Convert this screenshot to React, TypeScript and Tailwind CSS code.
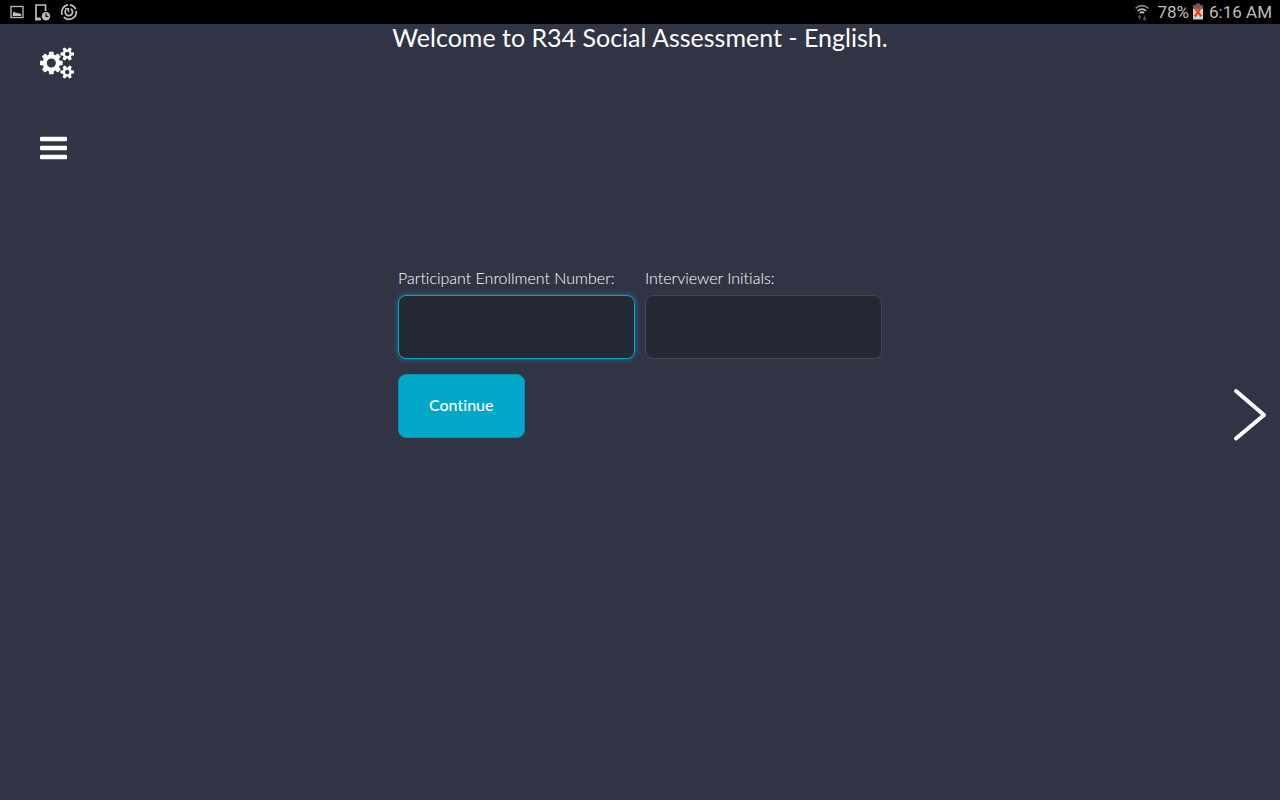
import { useId } from 'react';

function ImageIcon() {
  return (
    <svg className="h-4 w-4" viewBox="0 0 16 16" fill="none">
      <rect x="2" y="2.5" width="12" height="11" stroke="#bdbdbd" strokeWidth="1.3" />
      <path d="M3.8 12V9L5.5 7.5L7 9.2L8.5 8.6L9.5 9.6L11 9.2L12.2 10.2V12Z" fill="#bdbdbd" />
    </svg>
  );
}

function DeviceClockIcon() {
  return (
    <svg className="h-5 w-5" viewBox="0 0 20 20" fill="none">
      <path d="M13.5 9V3H4V17.5H9" stroke="#bdbdbd" strokeWidth="1.7" />
      <path d="M3.2 15.5H8.5V18.3H3.2Z" fill="#bdbdbd" />
      <circle cx="14" cy="14.2" r="4.2" fill="#bdbdbd" />
      <path d="M14 11.5V14.4H16.4" stroke="#000" strokeWidth="1.1" />
    </svg>
  );
}

function SyncRingIcon() {
  return (
    <svg className="h-5 w-5" viewBox="0 0 20 20" fill="none" stroke="#bdbdbd">
      <path d="M9 2.8A7.3 7.3 0 0 0 3.3 12.8" strokeWidth="1.8" />
      <path d="M4.8 15.1A7.3 7.3 0 0 0 17.2 8.9" strokeWidth="1.8" />
      <path d="M10.8 2.8A7.3 7.3 0 0 1 16.6 7.2" strokeWidth="1.8" />
      <path d="M7 7.6A3.7 3.7 0 1 0 11.6 6.7" strokeWidth="1.8" />
      <path d="M6.2 6.8H9.4V10" strokeWidth="1.5" />
    </svg>
  );
}

function WifiIcon() {
  return (
    <svg className="h-5 w-4" viewBox="0 0 16 20" fill="none" strokeWidth="1.6">
      <path d="M1.6 6.4Q8 1 14.4 6.4" stroke="#8c8c8c" />
      <path d="M3.8 8.9Q8 5.2 12.2 8.9" stroke="#b8b8b8" />
      <path d="M5.9 11.2Q8 9.2 10.1 11.2" stroke="#c8c8c8" />
      <path d="M5.5 18V13.6M3.8 15.5L5.5 13.6L7.2 15.5M10.5 13.6V18M8.8 16L10.5 18L12.2 16" stroke="#4d4d4d" strokeWidth="1.2" />
    </svg>
  );
}

function BatteryIcon() {
  return (
    <svg className="h-5 w-3" viewBox="0 0 12 20" fill="none">
      <path d="M4 1.5H8V3H11V8H1V3H4Z" fill="#606060" />
      <path d="M1 7H11V17.5H1Z" fill="#d2d2d2" />
      <path d="M2.3 5.5L9.4 14.3M9.4 5L2.8 14.5" stroke="#e9451d" strokeWidth="2.2" />
    </svg>
  );
}

function CogsIcon() {
  return (
    <svg className="h-8 w-[34px]" viewBox="0 0 1920 1792" fill="currentColor" aria-hidden="true">
      <path d="M896 896q0-106-75-181t-181-75-181 75-75 181 75 181 181 75 181-75 75-181zm768 512q0-52-38-90t-90-38-90 38-38 90q0 53 37.5 90.5t90.5 37.5 90.5-37.5 37.5-90.5zm0-1024q0-52-38-90t-90-38-90 38-38 90q0 53 37.5 90.5t90.5 37.5 90.5-37.5 37.5-90.5zm-384 421v185q0 10-7 19.5t-16 10.5l-155 24q-11 35-32 76 34 48 90 115 7 11 7 20 0 12-7 19-23 30-82.5 89.5t-78.5 59.5q-11 0-21-7l-115-90q-37 19-77 31-11 108-23 155-7 24-30 24h-186q-11 0-20-7.5t-10-17.5l-23-153q-34-10-75-31l-118 89q-7 7-20 7-11 0-21-8-144-133-144-160 0-9 7-19 10-14 41-53t47-61q-23-44-35-82l-152-24q-10-1-17-9.5t-7-19.5v-185q0-10 7-19.5t16-10.5l155-24q11-35 32-76-34-48-90-115-7-11-7-20 0-12 7-20 22-30 82-89t79-59q11 0 21 7l115 90q34-18 77-32 11-108 23-154 7-24 30-24h186q11 0 20 7.5t10 17.5l23 153q34 10 75 31l118-89q8-7 20-7 11 0 21 8 144 133 144 160 0 8-7 19-12 16-42 54t-45 60q23 48 34 82l152 23q10 2 17 10.5t7 19.5zm640 533v140q0 16-149 31-12 27-30 52 51 113 51 138 0 4-4 7-122 71-124 71-8 0-46-47t-52-68q-20 2-30 2t-30-2q-14 21-52 68t-46 47q-2 0-124-71-4-3-4-7 0-25 51-138-18-25-30-52-149-15-149-31v-140q0-16 149-31 13-29 30-52-51-113-51-138 0-4 4-7 4-2 35-20t59-34 30-16q8 0 46 46.5t52 67.5q20-2 30-2t30 2q51-71 92-112l6-2q4 0 124 70 4 3 4 7 0 25-51 138 17 23 30 52 149 15 149 31zm0-1024v140q0 16-149 31-12 27-30 52 51 113 51 138 0 4-4 7-122 71-124 71-8 0-46-47t-52-68q-20 2-30 2t-30-2q-14 21-52 68t-46 47q-2 0-124-71-4-3-4-7 0-25 51-138-18-25-30-52-149-15-149-31v-140q0-16 149-31 13-29 30-52-51-113-51-138 0-4 4-7 4-2 35-20t59-34 30-16q8 0 46 46.5t52 67.5q20-2 30-2t30 2q51-71 92-112l6-2q4 0 124 70 4 3 4 7 0 25-51 138 17 23 30 52 149 15 149 31z" />
    </svg>
  );
}

function BarsIcon() {
  return (
    <svg className="h-8 w-[27px]" viewBox="0 0 1536 1792" fill="currentColor" aria-hidden="true">
      <rect y="256" width="1536" height="256" rx="64" />
      <rect y="768" width="1536" height="256" rx="64" />
      <rect y="1280" width="1536" height="256" rx="64" />
    </svg>
  );
}

function StatusBar() {
  return (
    <header className="flex h-6 items-center justify-between bg-black pr-2 pl-[9px] font-['Roboto',sans-serif] text-[17px] leading-6 text-[#bdbdbd]">
      <div className="flex items-center gap-[7px]">
        <ImageIcon />
        <DeviceClockIcon />
        <SyncRingIcon />
      </div>
      <div className="flex items-center">
        <WifiIcon />
        <span className="ml-2">78%</span>
        <span className="ml-[3px] flex">
          <BatteryIcon />
        </span>
        <span className="ml-[5px]">6:16 AM</span>
      </div>
    </header>
  );
}

function Field({ label, autoFocus = false }: { label: string; autoFocus?: boolean }) {
  const id = useId();
  return (
    <div className="flex min-w-0 flex-1 flex-col gap-[5px]">
      <label htmlFor={id} className="text-base leading-6 font-light whitespace-nowrap">
        {label}
      </label>
      <input
        id={id}
        type="text"
        autoFocus={autoFocus}
        className="h-16 w-full rounded-lg border border-[#434660] bg-[#252934] px-4 text-base caret-transparent outline-none focus:border-[#00a8ca] focus:shadow-[0_0_6px_rgba(0,168,202,0.6)]"
      />
    </div>
  );
}

export default function App() {
  return (
    <div className="flex min-h-screen flex-col bg-[#313444] font-['Lato',sans-serif] text-white [font-variant-ligatures:none]">
      <StatusBar />
      <main className="grid flex-1 grid-cols-[1fr_minmax(0,484px)_1fr]">
        <nav className="flex flex-col items-start gap-[53px] pt-[23px] pl-10">
          <button type="button" aria-label="Settings">
            <CogsIcon />
          </button>
          <button type="button" aria-label="Menu">
            <BarsIcon />
          </button>
        </nav>
        <section className="flex flex-col items-center">
          <h1 className="text-[25px] leading-[26px] whitespace-nowrap">Welcome to R34 Social Assessment - English.</h1>
          <form className="mt-[216px] w-full" onSubmit={(event) => event.preventDefault()}>
            <div className="flex gap-2.5">
              <Field label="Participant Enrollment Number:" autoFocus />
              <Field label="Interviewer Initials:" />
            </div>
            <button
              type="submit"
              className="mt-[15px] h-16 rounded-lg border border-[#0093b1] bg-[#02a7c9] px-[30px] pb-0.5 text-base font-medium"
            >
              Continue
            </button>
          </form>
        </section>
        <div className="flex justify-end pt-[364px] pr-3">
          <button type="button" aria-label="Next page" className="self-start">
            <svg className="h-[54px] w-9" viewBox="0 0 36 54" fill="none" aria-hidden="true">
              <path d="M4 3L32 27L4 50.5" stroke="currentColor" strokeWidth="4" strokeLinecap="round" strokeLinejoin="round" />
            </svg>
          </button>
        </div>
      </main>
    </div>
  );
}
